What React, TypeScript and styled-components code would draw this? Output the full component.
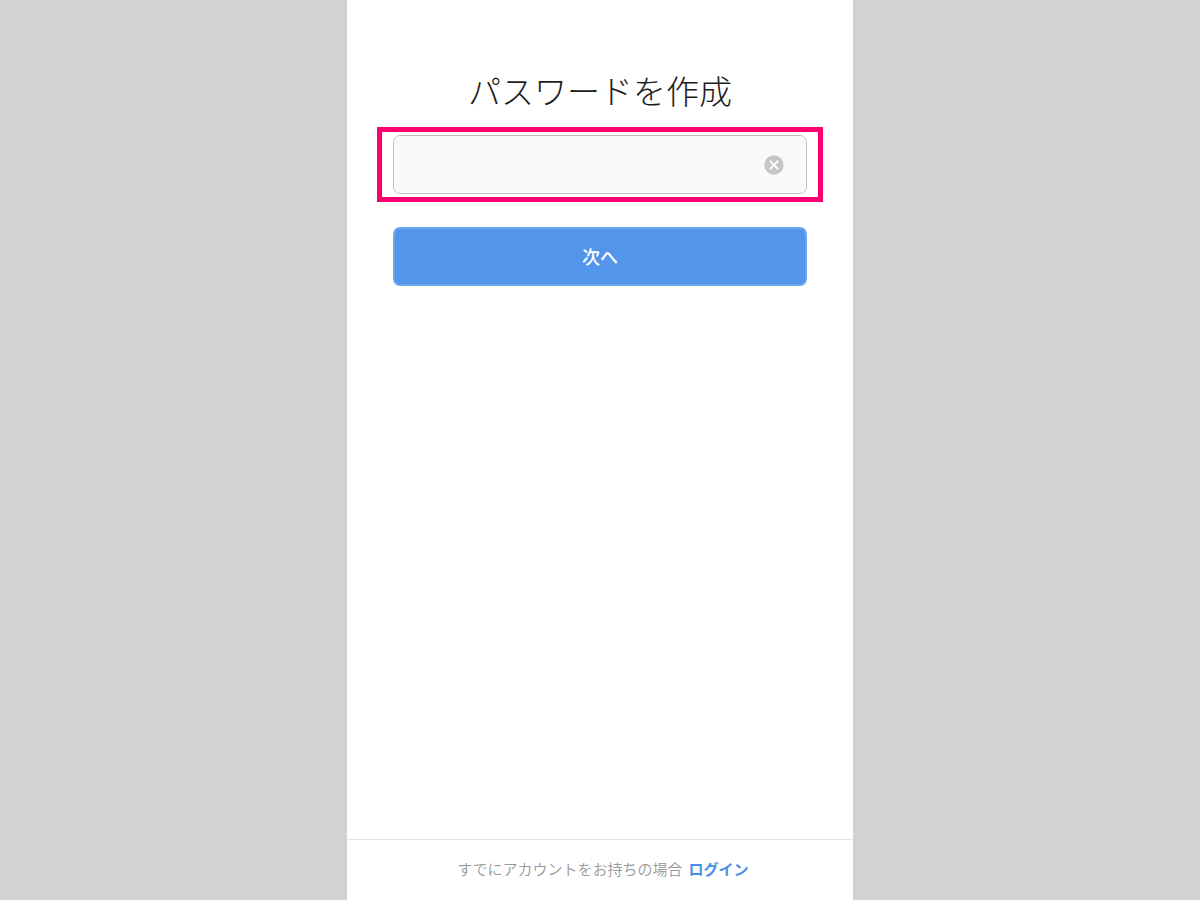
import React, { useState } from "react";
import styled, { createGlobalStyle } from "styled-components";

const GlobalStyle = createGlobalStyle`
  *, *::before, *::after { box-sizing: border-box; }
  body {
    margin: 0;
    background: #d2d2d2;
    font-family: "Noto Sans CJK JP", sans-serif;
  }
`;

const Screen = styled.main`
  display: flex;
  flex-direction: column;
  width: 100%;
  max-width: 506px;
  min-height: 100vh;
  margin: 0 auto;
  background: #fff;
`;

const Form = styled.form`
  flex: 1;
  display: flex;
  flex-direction: column;
  padding: 66px 30px 32px;
`;

const Title = styled.label`
  font-size: 33px;
  line-height: 48px;
  font-weight: 300;
  color: #1c1c1c;
  text-align: center;
  margin-bottom: 13px;
`;

const Highlight = styled.div`
  border: 5px solid #ff0070;
  padding: 3px 11px;
  margin-bottom: 25px;
`;

const Field = styled.div`
  display: flex;
  align-items: center;
  height: 59px;
  padding: 0 22px;
  border: 1px solid #c2c2c2;
  border-radius: 7px;
  background: #fafafa;
`;

const PasswordInput = styled.input`
  flex: 1;
  min-width: 0;
  height: 100%;
  border: 0;
  outline: 0;
  background: transparent;
  font: inherit;
  font-size: 18px;
`;

const ClearButton = styled.button`
  display: flex;
  padding: 0;
  border: 0;
  background: transparent;
  cursor: pointer;
`;

const NextButton = styled.button`
  height: 59px;
  margin: 0 16px;
  padding: 0 0 2px;
  border: 2px solid #6aa8ef;
  border-radius: 7px;
  background: #5295e9;
  color: #fff;
  font: inherit;
  font-size: 18px;
  line-height: 24px;
  font-weight: 500;
  cursor: pointer;
`;

const Footer = styled.footer`
  display: flex;
  justify-content: center;
  align-items: center;
  gap: 6px;
  height: 61px;
  padding: 0 0 2px 6px;
  border-top: 1px solid #e2e2e2;
  font-size: 15px;
  line-height: 24px;
  font-weight: 350;
  color: #999;
`;

const LoginLink = styled.a`
  color: #468fe8;
  font-weight: 700;
  text-decoration: none;
`;

export default function App() {
  const [password, setPassword] = useState("");
  return (
    <>
      <GlobalStyle />
      <Screen>
        <Form onSubmit={(e: React.FormEvent) => e.preventDefault()}>
          <Title htmlFor="password">パスワードを作成</Title>
          <Highlight>
            <Field>
              <PasswordInput
                id="password"
                type="password"
                value={password}
                onChange={(e: React.ChangeEvent<HTMLInputElement>) => setPassword(e.target.value)}
              />
              <ClearButton type="button" aria-label="クリア" onClick={() => setPassword("")}>
                <svg width="20" height="20" viewBox="0 0 20 20" aria-hidden="true">
                  <circle cx="10" cy="10" r="9.7" fill="#c6c6c6" />
                  <path d="M6.4 6.4l7.2 7.2M13.6 6.4l-7.2 7.2" stroke="#fff" strokeWidth="2" strokeLinecap="round" />
                </svg>
              </ClearButton>
            </Field>
          </Highlight>
          <NextButton type="submit">次へ</NextButton>
        </Form>
        <Footer>
          <span>すでにアカウントをお持ちの場合</span>
          <LoginLink href="#login">ログイン</LoginLink>
        </Footer>
      </Screen>
    </>
  );
}
